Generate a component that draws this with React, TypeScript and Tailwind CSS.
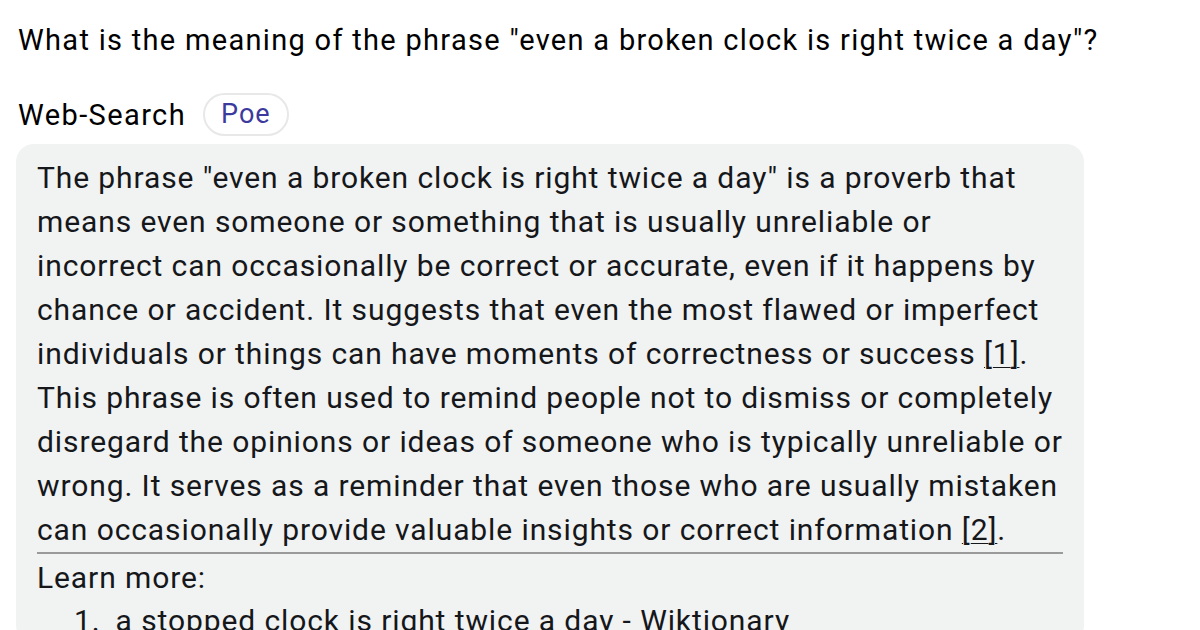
const LINES = [
  'The phrase "even a broken clock is right twice a day" is a proverb that',
  'means even someone or something that is usually unreliable or',
  'incorrect can occasionally be correct or accurate, even if it happens by',
  'chance or accident. It suggests that even the most flawed or imperfect',
  'individuals or things can have moments of correctness or success ',
  'This phrase is often used to remind people not to dismiss or completely',
  'disregard the opinions or ideas of someone who is typically unreliable or',
  'wrong. It serves as a reminder that even those who are usually mistaken',
  'can occasionally provide valuable insights or correct information ',
];

function Cite({ n }: { n: number }) {
  return <span className="underline decoration-1 underline-offset-[3px]">[{n}]</span>;
}

export default function App() {
  return (
    <div
      className="w-[1200px] h-[630px] overflow-hidden bg-white flex flex-col"
      style={{ fontFamily: 'Roboto, "Noto Sans", sans-serif' }}>
      <div className="pl-[18px] pt-[20px] text-[29px] tracking-[1.3px] leading-[40px] text-black whitespace-nowrap">
        What is the meaning of the phrase "even a broken clock is right twice a day"?
      </div>

      <div className="pl-[18px] mt-[33px] flex items-center gap-[17px]">
        <span className="text-[29px] tracking-[1.4px] leading-[40px] text-black">Web-Search</span>
        <span className="h-[43px] px-[16px] rounded-full border-2 border-[#e8e8e8] flex items-center text-[27px] tracking-[1px] text-[#3c3a9c]">
          Poe
        </span>
      </div>

      <div className="ml-[16px] mt-[8px] w-[1068px] rounded-[18px] bg-[#f1f2f2] px-[21px] pt-[12px] text-[30px] tracking-[0.9px] leading-[44px] text-[#15171a] whitespace-nowrap">
        {LINES.map((line, i) => (
          <div key={i}>
            {line}
            {i === 4 && (
              <>
                <Cite n={1} />.
              </>
            )}
            {i === 8 && (
              <>
                <Cite n={2} />.
              </>
            )}
          </div>
        ))}
        <div className="h-[2px] bg-[#9a9a9a]" />
        <div className="mt-[2px]">Learn more:</div>
        <div className="flex gap-[15px] pl-[37px] mt-[-1px]">
          <span>1.</span>
          <span>a stopped clock is right twice a day - Wiktionary</span>
        </div>
      </div>
    </div>
  );
}
